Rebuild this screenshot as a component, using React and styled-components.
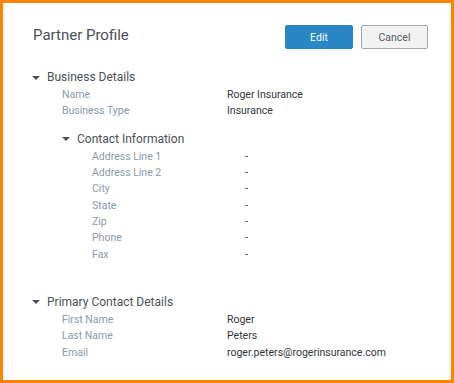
import React from 'react';
import styled, { createGlobalStyle } from 'styled-components';

const GlobalStyle = createGlobalStyle`
  html, body {
    margin: 0;
    padding: 0;
    background: #ffffff;
  }
  body {
    font-family: Roboto, "Liberation Sans", sans-serif;
  }
`;

const Frame = styled.div`
  box-sizing: border-box;
  width: 454px;
  height: 383px;
  border: 3px solid #ff8200;
  background: #fff;
  padding: 22px 23px 0 30px;
`;

const Header = styled.div`
  display: flex;
  align-items: center;
  justify-content: space-between;
  height: 24px;
  margin-bottom: 18px;
`;

const PageTitle = styled.h1`
  margin: -4px 0 0 0;
  font-size: 15px;
  font-weight: 400;
  color: #4c5157;
  line-height: 20px;
`;

const ButtonGroup = styled.div`
  display: flex;
  gap: 8px;
`;

const Button = styled.button`
  box-sizing: border-box;
  height: 24px;
  width: ${p => (p.$primary ? '68px' : '67px')};
  border-radius: 2px;
  font-family: Roboto, "Liberation Sans", sans-serif;
  font-size: 10.5px;
  cursor: pointer;
  border: 1px solid ${p => (p.$primary ? '#2a85c2' : '#a3a8ad')};
  background: ${p => (p.$primary ? '#2a86c5' : '#f2f2f2')};
  color: ${p => (p.$primary ? '#ffffff' : '#555a60')};
`;

const Section = styled.div`
  display: flex;
  flex-direction: column;
  margin-left: ${p => (p.$nested ? '30px' : '0')};
  margin-top: ${p => p.$gap || '0'};
`;

const SectionHeader = styled.div`
  display: flex;
  align-items: center;
  height: 20px;
  font-size: 12px;
  color: #4c5157;
`;

const Caret = styled.span`
  width: 0;
  height: 0;
  border-left: 4px solid transparent;
  border-right: 4px solid transparent;
  border-top: 4px solid #4c5157;
  margin: 1px 7px 0 -1px;
`;

const Rows = styled.div`
  display: grid;
  grid-template-columns: ${p => p.$labelWidth} 1fr;
  padding-left: 29px;
`;

const Label = styled.div`
  font-size: 10.5px;
  line-height: 16.33px;
  color: #8a9aae;
`;

const Value = styled.div`
  font-size: 10.5px;
  line-height: 16.33px;
  color: #33373b;
`;

const DetailSection = ({ title, rows, labelWidth = '165px', nested, gap, children }) => (
  <Section $nested={nested} $gap={gap}>
    <SectionHeader>
      <Caret />
      {title}
    </SectionHeader>
    <Rows $labelWidth={labelWidth}>
      {rows.map(([label, value]) => (
        <React.Fragment key={label}>
          <Label>{label}</Label>
          <Value>{value}</Value>
        </React.Fragment>
      ))}
    </Rows>
    {children}
  </Section>
);

export default function App() {
  return (
    <>
      <GlobalStyle />
      <Frame>
        <Header>
          <PageTitle>Partner Profile</PageTitle>
          <ButtonGroup>
            <Button $primary>Edit</Button>
            <Button>Cancel</Button>
          </ButtonGroup>
        </Header>

        <DetailSection
          title="Business Details"
          rows={[
            ['Name', 'Roger Insurance'],
            ['Business Type', 'Insurance'],
          ]}
        >
          <DetailSection
            nested
            gap="9px"
            labelWidth="153px"
            title="Contact Information"
            rows={[
              ['Address Line 1', '-'],
              ['Address Line 2', '-'],
              ['City', '-'],
              ['State', '-'],
              ['Zip', '-'],
              ['Phone', '-'],
              ['Fax', '-'],
            ]}
          />
        </DetailSection>

        <DetailSection
          gap="29px"
          title="Primary Contact Details"
          rows={[
            ['First Name', 'Roger'],
            ['Last Name', 'Peters'],
            ['Email', 'roger.peters@rogerinsurance.com'],
          ]}
        />
      </Frame>
    </>
  );
}
